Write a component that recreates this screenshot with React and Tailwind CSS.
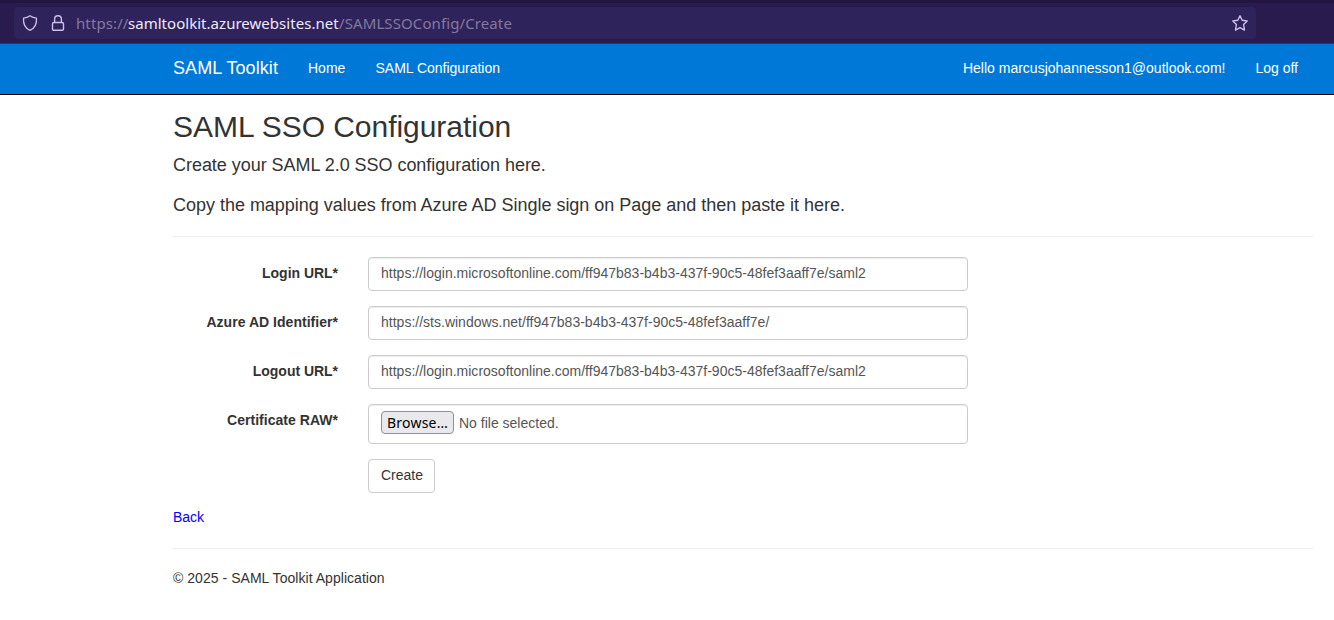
import React from "react";

function ShieldIcon() {
  return (
    <svg width="16" height="18" viewBox="0 0 16 18" fill="none" stroke="#cdbfeb" strokeWidth="1.3" strokeLinejoin="round">
      <path d="M8 1.7 C6 3.1 3.7 3.9 1.5 4.2 C1.2 9.6 3 14.2 8 16.3 C13 14.2 14.8 9.6 14.5 4.2 C12.3 3.9 10 3.1 8 1.7 Z" />
    </svg>
  );
}

function LockIcon() {
  return (
    <svg width="14" height="18" viewBox="0 0 14 18" fill="none" stroke="#cdbfeb" strokeWidth="1.4">
      <rect x="1.5" y="8.5" width="11" height="7.8" rx="1.4" />
      <path d="M3.6 8.4 V5 C3.6 3 5 1.7 7 1.7 C9 1.7 10.4 3 10.4 5 V8.4" />
    </svg>
  );
}

function StarIcon() {
  return (
    <svg width="18" height="18" viewBox="0 0 18 18" fill="none" stroke="#cdbfeb" strokeWidth="1.4" strokeLinejoin="round">
      <path d="M9 1.8 L11.2 6.3 L16.2 7 L12.6 10.5 L13.5 16.1 L9 13.6 L4.5 16.1 L5.4 10.5 L1.8 7 L6.8 6.3 Z" />
    </svg>
  );
}

function Row({ label, labelClass, children }) {
  return (
    <div className="mb-[15px] flex">
      <div className="flex w-[165px] shrink-0 justify-end pt-[6px] font-bold leading-5">
        <span className={labelClass}>{label}</span>
      </div>
      <div className="ml-[30px]">{children}</div>
    </div>
  );
}

function TextField({ value }) {
  return (
    <div className="flex h-[34px] w-[600px] rounded-[4px] border border-[#ccc] px-3 pt-[5px] leading-5 text-[#555] shadow-[inset_0_1px_1px_rgba(0,0,0,0.075)]">
      <span className="tracking-[0.007px]">{value}</span>
    </div>
  );
}

export default function App() {
  return (
    <div className="h-[620px] w-[1334px] overflow-hidden whitespace-nowrap bg-white font-['Liberation_Sans',Arial,sans-serif] text-[14px] leading-5 text-[#333]">
      <div className="h-11 border-t-[3px] border-b border-t-[#221541] border-b-[#40305f] bg-[#291b4d] pt-1 pl-[14px]">
        <div className="flex h-8 w-[1242px] items-center rounded-[4px] bg-[#2e235a] pr-[7px] pl-2 font-['Noto_Sans',sans-serif] text-[15px] text-[#85799f]">
          <ShieldIcon />
          <span className="ml-[13px]"><LockIcon /></span>
          <span className="ml-[11px] w-[52px] tracking-[0.1px]">https://</span>
          <span className="w-[211px] tracking-[0.03px] text-[#f0eaff]">samltoolkit.azurewebsites.net</span>
          <span className="tracking-[0.1px]">/SAMLSSOConfig/Create</span>
          <span className="ml-auto"><StarIcon /></span>
        </div>
      </div>

      <nav className="flex h-[51px] border-b border-black bg-[#0078d7] pt-[14px] pl-[173px] text-white">
        <span className="w-[135px] text-[18px] tracking-[0.08px]">SAML Toolkit</span>
        <span className="w-[67.5px]">Home</span>
        <span className="tracking-[-0.02px]">SAML Configuration</span>
        <span className="ml-auto">Hello marcusjohannesson1@outlook.com!</span>
        <span className="mr-[36px] ml-[30px]">Log off</span>
      </nav>

      <main className="ml-[173px] w-[1140px] pt-[15px]">
        <h2 className="h-[45px] text-[30px] leading-[33px] tracking-[-0.04px]">SAML SSO Configuration</h2>
        <h4 className="h-10 text-[18px] leading-5 tracking-[-0.04px]">Create your SAML 2.0 SSO configuration here.</h4>
        <h4 className="h-[41px] text-[18px] leading-5 tracking-[-0.018px]">Copy the mapping values from Azure AD Single sign on Page and then paste it here.</h4>
        <hr className="mb-5 border-t border-[#eee]" />

        <Row label="Login URL*" labelClass="tracking-[-0.03px]">
          <TextField value="https://login.microsoftonline.com/ff947b83-b4b3-437f-90c5-48fef3aaff7e/saml2" />
        </Row>
        <Row label="Azure AD Identifier*" labelClass="tracking-[0.03px]">
          <TextField value="https://sts.windows.net/ff947b83-b4b3-437f-90c5-48fef3aaff7e/" />
        </Row>
        <Row label="Logout URL*" labelClass="tracking-[-0.03px]">
          <TextField value="https://login.microsoftonline.com/ff947b83-b4b3-437f-90c5-48fef3aaff7e/saml2" />
        </Row>
        <Row label="Certificate RAW*" labelClass="tracking-[0.03px]">
          <div className="flex h-10 w-[600px] rounded-[4px] border border-[#ccc] px-3 pt-[6px] text-[#555] shadow-[inset_0_1px_1px_rgba(0,0,0,0.075)]">
            <button className="flex h-[23px] w-[73px] items-center justify-center rounded-[4px] border border-[#8f8f9d] bg-[#e9e9ed] font-['Noto_Sans',sans-serif] text-[14px] tracking-[0.2px] text-black">Browse…</button>
            <span className="ml-[5px] pt-[2px]">No file selected.</span>
          </div>
        </Row>
        <Row label="">
          <button className="flex h-[34px] w-[67px] justify-center rounded-[4px] border border-[#ccc] pt-[5px] pl-px leading-5">Create</button>
        </Row>

        <a className="-mt-px block h-[41px] text-[#0000ff]">Back</a>
        <hr className="mb-[19px] border-t border-[#eee]" />
        <footer className="tracking-[0.04px]">© 2025 - SAML Toolkit Application</footer>
      </main>
    </div>
  );
}
